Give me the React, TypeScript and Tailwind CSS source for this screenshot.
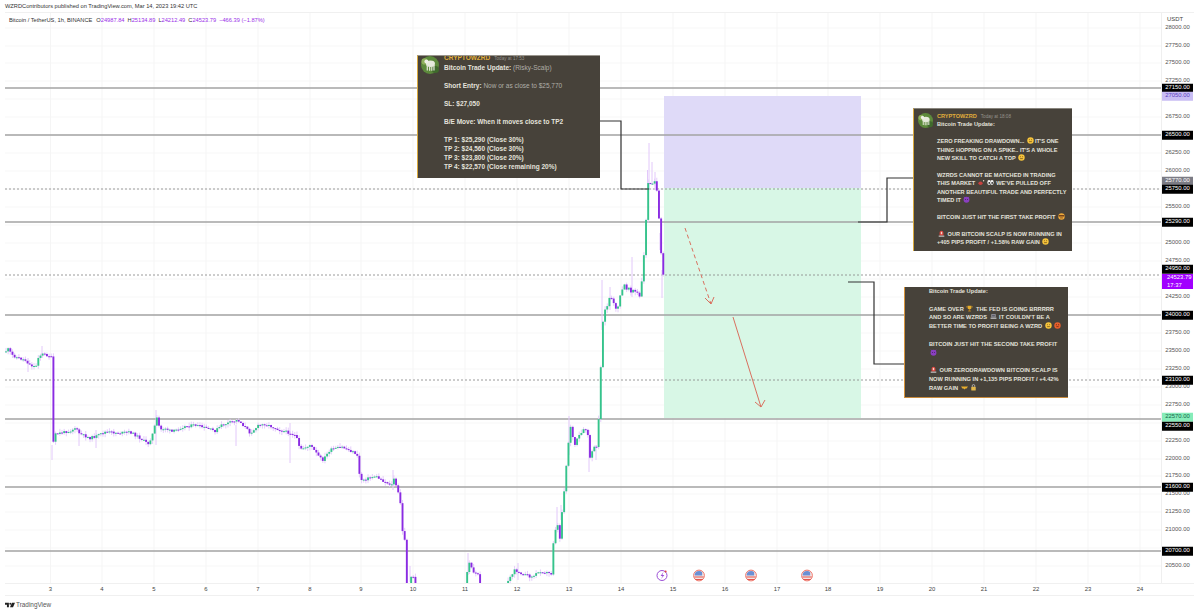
import type { ReactNode } from "react";

// keypoints of the close line, in page pixels
const path: [number, number][] = [
  [5, 352], [8, 349], [12, 355], [18, 358], [25, 360], [30, 365], [36, 367], [37, 358], [42, 354], [50, 356], [51.5, 358],
  [53, 447], [54, 435], [60, 433], [70, 431], [75, 428], [80, 434], [90, 438], [97, 436], [105, 432], [120, 433], [130, 432],
  [140, 438], [148, 444], [152, 436], [157, 418], [160, 430], [165, 428], [172, 432], [182, 427], [195, 425], [205, 428],
  [215, 431], [222, 425], [238, 420], [245, 427], [250, 433], [258, 426], [265, 424], [280, 430], [290, 433], [296, 436],
  [300, 450], [310, 445], [320, 458], [323, 460], [330, 450], [342, 447], [355, 453], [358, 458], [360, 480], [366, 479],
  [375, 476], [385, 482], [392, 485], [394, 478], [397, 490], [400, 497], [402, 530], [405, 540], [407, 590], [409, 590],
  [411, 578], [414, 577], [416, 590], [463, 595], [466, 590], [468, 560], [472, 570], [478, 575], [481, 590], [505, 590],
  [510, 577], [515, 570], [525, 575], [532, 577], [540, 571], [548, 573], [552, 574], [553, 545], [556, 525], [558, 526],
  [559, 547], [562, 512], [565, 480], [567, 458], [570, 425], [571, 426], [573, 440], [575, 445], [580, 435], [585, 430],
  [587, 428], [589, 445], [590, 460], [592, 450], [597, 448], [598, 425], [600, 400], [602, 320], [605, 312], [610, 297],
  [613, 307], [618, 305], [620, 300], [623, 287], [630, 287], [635, 292], [640, 298], [643, 273], [646, 220], [647.5, 183],
  [650, 185], [655, 180], [658, 198], [660, 243], [663.4, 277],
];

const extraWicks: [number, number, number][] = [
  [649, 143, 190], [652, 162, 185], [647.5, 170, 190], [655, 172, 190], [632, 257, 297], [602, 280, 330], [610, 287, 310],
  [662, 270, 298], [660, 233, 250], [52, 445, 460], [79, 428, 446], [96, 430, 448], [156, 410, 445], [290, 423, 463],
  [557, 507, 530], [561, 505, 520], [569, 416, 455], [589, 430, 472], [596, 445, 460], [468, 553, 575], [410, 566, 582],
  [393, 470, 490], [42, 346, 358], [28, 358, 372], [236, 425, 446], [518, 563, 580],
];

function lineAt(x: number) {
  for (let i = 1; i < path.length; i++) {
    if (x <= path[i][0]) {
      const [x0, y0] = path[i - 1];
      const [x1, y1] = path[i];
      return y0 + ((y1 - y0) * (x - x0)) / (x1 - x0);
    }
  }
  return path[path.length - 1][1];
}

function makeCandles() {
  const out: { x: number; o: number; c: number; hi: number; lo: number }[] = [];
  let seed = 11;
  const rnd = () => {
    seed = (seed * 9301 + 49297) % 233280;
    return seed / 233280;
  };
  let prev = lineAt(5);
  for (let x = 6; x < 664; x += 2.155) {
    // the last two days swing harder than the flat stretch before them
    const noise = x > 600 && x < 645 ? 9 : x > 555 && x < 600 ? 5 : 2.6;
    const c = lineAt(x) + (rnd() - 0.5) * noise;
    const top = Math.min(prev, c);
    const bottom = Math.max(prev, c);
    out.push({ x, o: prev, c, hi: top - rnd() * 3.8, lo: bottom + rnd() * 3.8 });
    prev = c;
  }
  return out;
}

const candles = makeCandles();

const solidLevels = [88, 135, 222, 315, 419, 487, 551];
const dashedLevels = [189, 275, 380];
const gridY = [28, 46, 63, 81, 99, 117, 135, 153, 171, 189, 207, 225, 243, 261, 279, 297, 315, 333, 351, 369, 387, 405, 423, 441, 459, 476, 494, 512, 530, 548, 566];
const days = [
  [50.5, "3"], [102, "4"], [154, "5"], [206, "6"], [258, "7"], [310, "8"], [361, "9"], [413, "10"], [465, "11"], [517, "12"], [569, "13"], [621, "14"],
  [673, "15"], [725, "16"], [777, "17"], [828, "18"], [880, "19"], [932, "20"], [984, "21"], [1036, "22"], [1088, "23"], [1140, "24"],
] as const;

const axisLabels: [number, string][] = [
  [28, "28000.00"], [46, "27750.00"], [63, "27500.00"], [81, "27250.00"], [117, "26750.00"], [153, "26250.00"], [171, "26000.00"],
  [207, "25500.00"], [243, "25000.00"], [261, "24750.00"], [297, "24250.00"], [333, "23750.00"], [351, "23500.00"], [369, "23250.00"],
  [387, "23000.00"], [405, "22750.00"], [441, "22250.00"], [459, "22000.00"], [476, "21750.00"], [494, "21500.00"], [512, "21250.00"],
  [530, "21000.00"], [566, "20500.00"],
];

const tags: { y: number; text: string; cls: string }[] = [
  { y: 88, text: "27150.00", cls: "bg-black text-white" },
  { y: 96, text: "27050.00", cls: "bg-[#c9bdf4] text-[#5b3fc0]" },
  { y: 135, text: "26500.00", cls: "bg-black text-white" },
  { y: 181, text: "25770.00", cls: "bg-[#7b7b84] text-white" },
  { y: 189, text: "25750.00", cls: "bg-black text-white" },
  { y: 222, text: "25290.00", cls: "bg-black text-white" },
  { y: 269, text: "24950.00", cls: "bg-black text-white" },
  { y: 315, text: "24000.00", cls: "bg-black text-white" },
  { y: 380, text: "23100.00", cls: "bg-black text-white" },
  { y: 417, text: "22570.00", cls: "bg-[#86ecb9] text-[#14694a]" },
  { y: 426, text: "22550.00", cls: "bg-black text-white" },
  { y: 487, text: "21600.00", cls: "bg-black text-white" },
  { y: 551, text: "20700.00", cls: "bg-black text-white" },
];

function Emoji({ kind }: { kind: string }) {
  const face = "#f5c33b";
  return (
    <svg viewBox="0 0 10 10" className="mx-[1px] inline-block h-[7px] w-[7px] align-[-1px]">
      {kind === "face" && (
        <>
          <circle cx="5" cy="5" r="4.6" fill={face} />
          <circle cx="3.4" cy="4" r=".7" fill="#5a3a10" />
          <circle cx="6.6" cy="4" r=".7" fill="#5a3a10" />
          <path d="M3 6.6h4" stroke="#5a3a10" strokeWidth=".9" />
        </>
      )}
      {kind === "hot" && (
        <>
          <circle cx="5" cy="5" r="4.6" fill="#e8602c" />
          <circle cx="3.4" cy="4" r=".8" fill="#5a2010" />
          <circle cx="6.6" cy="4" r=".8" fill="#5a2010" />
          <path d="M3.4 6.6h3.2" stroke="#5a2010" />
        </>
      )}
      {kind === "star" && (
        <>
          <circle cx="5" cy="5" r="4.6" fill="#eda83a" />
          <rect x="1" y="3" width="8" height="2" fill="#6a3a18" />
          <path d="M3 7h4" stroke="#6a3a18" />
        </>
      )}
      {kind === "devil" && (
        <>
          <circle cx="5" cy="5.4" r="4.2" fill="#8a3fc0" />
          <path d="M1.4 1l1.6 2M8.6 1L7 3" stroke="#8a3fc0" strokeWidth="1.2" />
          <circle cx="3.6" cy="5" r=".7" fill="#2e1045" />
          <circle cx="6.4" cy="5" r=".7" fill="#2e1045" />
        </>
      )}
      {kind === "lips" && (
        <>
          <ellipse cx="3.6" cy="6" rx="3" ry="2.6" fill="#c9413f" />
          <circle cx="8" cy="2.4" r="1" fill="#e8d4c8" />
        </>
      )}
      {kind === "eyes" && (
        <>
          <ellipse cx="2.9" cy="5" rx="2.4" ry="3.4" fill="#f4f4f4" />
          <ellipse cx="7.1" cy="5" rx="2.4" ry="3.4" fill="#f4f4f4" />
          <circle cx="3.2" cy="5.6" r="1.2" fill="#222" />
          <circle cx="7.4" cy="5.6" r="1.2" fill="#222" />
        </>
      )}
      {kind === "siren" && (
        <>
          <path d="M2.2 8V4a2.8 2.8 0 0 1 5.6 0v4z" fill="#d8403a" />
          <rect x="1" y="8" width="8" height="1.6" fill="#c8c8c8" />
          <rect x="4" y="2.6" width="2" height="3.4" fill="#f6d6cc" />
        </>
      )}
      {kind === "trophy" && (
        <>
          <path d="M2.4 1h5.2v3a2.6 2.6 0 0 1-5.2 0z" fill="#e6ac2c" />
          <path d="M4.4 6h1.2v2H4.4zM3 8h4v1.4H3z" fill="#b57f1e" />
          <path d="M2.4 2H1v1.4l1.4 1M7.6 2H9v1.4l-1.4 1" stroke="#e6ac2c" fill="none" strokeWidth=".7" />
        </>
      )}
      {kind === "laptop" && (
        <>
          <rect x="2" y="1.6" width="6" height="4.4" fill="#a9a9b2" />
          <rect x="3" y="2.4" width="4" height="2.8" fill="#5d5d68" />
          <rect x=".8" y="6.6" width="8.4" height="1.6" fill="#d0d0d6" />
        </>
      )}
      {kind === "hands" && <path d="M0 3.4h10L8 6.6H6.4L5 8 3.6 6.6H2z" fill="#e6ac2c" />}
      {kind === "bag" && (
        <>
          <rect x="1.8" y="4" width="6.4" height="5.4" rx="1" fill="#e2b64a" />
          <path d="M3.2 4V2.6a1.8 1.8 0 0 1 3.6 0V4" stroke="#d8d8d8" fill="none" />
        </>
      )}
    </svg>
  );
}

// green disc with a pale four-legged figure
function Avatar({ className }: { className: string }) {
  return (
    <svg viewBox="0 0 20 20" className={className}>
      <circle cx="10" cy="10" r="10" fill="#5d8a3c" />
      <circle cx="4" cy="6" r="3.5" fill="#8fb05c" />
      <circle cx="16" cy="15" r="4" fill="#3f6a2c" />
      <ellipse cx="10.5" cy="8.5" rx="5" ry="3.6" fill="#e6eadc" />
      <circle cx="6" cy="6" r="2.2" fill="#eef0e6" />
      <path d="M7 10v6M9.6 11v5.4M12 11v5.4M14.4 10v6" stroke="#dfe4d2" strokeWidth="1.4" />
    </svg>
  );
}

function Line({ children, gap }: { children?: ReactNode; gap?: boolean }) {
  return <div className={gap ? "mt-[1lh] whitespace-nowrap" : "whitespace-nowrap"}>{children}</div>;
}

function CardHead({ time, className }: { time: string; className: string }) {
  return (
    <div className={`flex items-baseline gap-[4px] overflow-visible whitespace-nowrap ${className}`}>
      <span className="font-semibold text-[#e0ae3a]">CRYPTOWZRD</span>
      <span className="text-[4.6px] text-[#96938c]">Today at {time}</span>
    </div>
  );
}

const B = ({ children }: { children: ReactNode }) => <span className="font-semibold text-[#e4e2dc]">{children}</span>;
const R = ({ children }: { children: ReactNode }) => <span className="text-[#b0aea8]">{children}</span>;

export default function App() {
  return (
    <div className="flex h-[613px] w-[1200px] flex-col overflow-hidden bg-white font-['Liberation_Sans',sans-serif] text-[#3a3a3a]">
      <div className="flex h-[12px] items-center pl-[5px] pt-[2px] text-[5.7px] leading-none text-[#333]">
        WZRDContributors published on TradingView.com, Mar 14, 2023 19:42 UTC
      </div>

      <div className="ml-[5px] mr-[6px] flex h-[571px] border-t border-[#f0f0f0]">
        <div className="relative h-full w-[1156px]">
          <svg viewBox="5 13 1156 570" className="absolute inset-0 h-full w-full">
            {gridY.map((y) => (
              <line key={y} x1="5" x2="1161" y1={y} y2={y} stroke="#f7f7f7" />
            ))}
            {days.map(([x]) => (
              <line key={x} x1={x} x2={x} y1="13" y2="583" stroke="#f5f5f5" />
            ))}
            <rect x="664" y="96" width="197" height="92" fill="#dfdaf8" />
            <rect x="664" y="188" width="197" height="230" fill="#d8f7e6" />
            {solidLevels.map((y) => (
              <line key={y} x1="5" x2="1161" y1={y} y2={y} stroke="#a3a3a3" strokeWidth="1.4" />
            ))}
            {dashedLevels.map((y) => (
              <line key={y} x1="5" x2="1161" y1={y} y2={y} stroke="#8f8f8f" strokeWidth="0.9" strokeDasharray="2 2" />
            ))}
            {candles.map((k) => (
              <line key={k.x} x1={k.x} x2={k.x} y1={k.hi} y2={k.lo} stroke="#e2c8fa" strokeWidth="0.9" />
            ))}
            {extraWicks.map(([x, a, b]) => (
              <line key={`${x}-${a}`} x1={x} x2={x} y1={a} y2={b} stroke="#e2c8fa" strokeWidth="1" />
            ))}
            {candles.map((k) => {
              const up = k.c < k.o;
              const top = Math.min(k.o, k.c);
              return (
                <rect
                  key={k.x}
                  x={k.x - 0.95}
                  y={top}
                  width="1.9"
                  height={Math.max(Math.abs(k.c - k.o), 1)}
                  fill={up ? "#35c48b" : "#8a2be2"}
                />
              );
            })}
            <path d="M600 121H621V189H649" fill="none" stroke="#333" strokeWidth="1.2" />
            <path d="M858 222H887V178H913" fill="none" stroke="#333" strokeWidth="1.2" />
            <path d="M848 282H874V364H905" fill="none" stroke="#333" strokeWidth="1.2" />
            <path d="M685 228L711 304" stroke="#d9705f" strokeWidth="1" strokeDasharray="4 3" />
            <path d="M705 298L711 304L714 297" fill="none" stroke="#d9705f" strokeWidth="1" />
            <path d="M733 317L761 407" stroke="#d9705f" strokeWidth="1" />
            <path d="M755 402L761 407L765 400" fill="none" stroke="#d9705f" strokeWidth="1" />
            <circle cx="662" cy="575.5" r="5" fill="#fff" stroke="#9c4fd6" strokeWidth="1" />
            <path d="M663.4 572L660.6 576H662.6L661 579L664.4 575H662.4Z" fill="#9c4fd6" />
            <circle cx="665.6" cy="571.6" r="1" fill="#e2433f" />
            {[699, 751, 807].map((x) => (
              <g key={x}>
                <circle cx={x} cy="575.5" r="5.4" fill="#f4e6e4" stroke="#f0786c" strokeWidth="1" />
                <path d={`M${x - 4.6} 576.5h9.2v1h-9.2zM${x - 3.8} 579h7.6v1h-7.6z`} fill="#e4554e" />
                <path d={`M${x - 4.4} 575.5a4.6 4.6 0 0 1 4.6-4.4a4.6 4.6 0 0 1 3 1.2v3.2z`} fill="#6b8fd4" />
              </g>
            ))}
          </svg>

          <div className="absolute left-[4px] top-[2px] whitespace-nowrap text-[5.7px] leading-[10px]">
            <span className="text-[#333]">Bitcoin / TetherUS, 1h, BINANCE</span>
            <span className="ml-[4px] text-[#333]">O</span>
            <span className="text-[#9b30e8]">24987.84</span>
            <span className="ml-[3px] text-[#333]">H</span>
            <span className="text-[#9b30e8]">25134.89</span>
            <span className="ml-[3px] text-[#333]">L</span>
            <span className="text-[#9b30e8]">24212.49</span>
            <span className="ml-[3px] text-[#333]">C</span>
            <span className="text-[#9b30e8]">24523.79</span>
            <span className="ml-[3px] text-[#9b30e8]">−466.39 (−1.87%)</span>
          </div>

          <div className="absolute left-[412px] top-[42px] flex h-[123px] w-[183px] gap-[5px] overflow-hidden border-l border-t border-l-[#d9a93c] border-t-[#9a968e] bg-[#47423a] pl-[3px] text-[6.5px] leading-[9px]">
            <Avatar className="h-[18px] w-[18px] shrink-0" />
            <div>
              <CardHead time="17:53" className="-mt-[3.5px] h-[10px]" />
              <Line><B>Bitcoin Trade Update:</B> <R>(Risky-Scalp)</R></Line>
              <Line gap><B>Short Entry:</B> <R>Now or as close to $25,770</R></Line>
              <Line gap><B>SL: $27,050</B></Line>
              <Line gap><B>B/E Move: When it moves close to TP2</B></Line>
              <Line gap><B>TP 1: $25,290 (Close 30%)</B></Line>
              <Line><B>TP 2: $24,560 (Close 30%)</B></Line>
              <Line><B>TP 3: $23,800 (Close 20%)</B></Line>
              <Line><B>TP 4: $22,570 (Close remaining 20%)</B></Line>
            </div>
          </div>

          <div className="absolute left-[908px] top-[95px] flex h-[143px] w-[159px] gap-[4px] overflow-hidden border-l border-t border-l-[#d9a93c] border-t-[#8a867e] bg-[#47423a] pl-[4px] pt-[3px] text-[5.6px] leading-[8.4px]">
            <Avatar className="mt-[1px] h-[15px] w-[15px] shrink-0" />
            <div>
              <CardHead time="18:08" className="h-[8.4px]" />
              <Line><B>Bitcoin Trade Update:</B></Line>
              <Line gap><B>ZERO FREAKING DRAWDOWN... <Emoji kind="face" />IT'S ONE</B></Line>
              <Line><B>THING HOPPING ON A SPIKE.. IT'S A WHOLE</B></Line>
              <Line><B>NEW SKILL TO CATCH A TOP <Emoji kind="face" /></B></Line>
              <Line gap><B>WZRDS CANNOT BE MATCHED IN TRADING</B></Line>
              <Line><B>THIS MARKET <Emoji kind="lips" /><Emoji kind="eyes" /> WE'VE PULLED OFF</B></Line>
              <Line><B>ANOTHER BEAUTIFUL TRADE AND PERFECTLY</B></Line>
              <Line><B>TIMED IT <Emoji kind="devil" /></B></Line>
              <Line gap><B>BITCOIN JUST HIT THE FIRST TAKE PROFIT <Emoji kind="star" /></B></Line>
              <Line gap><B><Emoji kind="siren" /> OUR BITCOIN SCALP IS NOW RUNNING IN</B></Line>
              <Line><B>+405 PIPS PROFIT / +1.58% RAW GAIN <Emoji kind="face" /></B></Line>
            </div>
          </div>

          <div className="absolute left-[899px] top-[274px] h-[111px] w-[164px] overflow-hidden border-b border-l border-b-[#c98a3a] border-l-[#d9953c] bg-[#47423a] pl-[24px] text-[5.7px] leading-[8.8px]">
            <Line><B>Bitcoin Trade Update:</B></Line>
            <Line gap><B>GAME OVER <Emoji kind="trophy" /> THE FED IS GOING BRRRRR</B></Line>
            <Line><B>AND SO ARE WZRDS <Emoji kind="laptop" /> IT COULDN'T BE A</B></Line>
            <Line><B>BETTER TIME TO PROFIT BEING A WZRD <Emoji kind="face" /><Emoji kind="hot" /></B></Line>
            <Line gap><B>BITCOIN JUST HIT THE SECOND TAKE PROFIT</B></Line>
            <Line><Emoji kind="devil" /></Line>
            <Line gap><B><Emoji kind="siren" /> OUR ZERODRAWDOWN BITCOIN SCALP IS</B></Line>
            <Line><B>NOW RUNNING IN +1,135 PIPS PROFIT / +4.42%</B></Line>
            <Line><B>RAW GAIN <Emoji kind="hands" /><Emoji kind="bag" /></B></Line>
          </div>
        </div>

        <div className="relative h-full w-[33px] border-l border-[#efefef] text-[5.9px] leading-none text-[#555]">
          <div className="absolute left-[5px] top-[1px] leading-[10px] text-[#444]">USDT</div>
          {axisLabels.map(([y, text]) => (
            <div key={text} className="absolute left-0 w-[31px] -translate-y-1/2 text-center" style={{ top: y - 13 }}>
              {text}
            </div>
          ))}
          {tags.map((t) => (
            <div
              key={t.text}
              className={`absolute left-0 flex h-[8.5px] w-[31px] -translate-y-1/2 items-center justify-center ${t.cls}`}
              style={{ top: t.y - 13 }}
            >
              {t.text}
            </div>
          ))}
          <div className="absolute left-0 top-[261px] flex h-[15px] w-[31px] flex-col justify-center bg-[#a100ff] pl-[5px] leading-[7.5px] text-white">
            <span>24523.79</span>
            <span>17:37</span>
          </div>
        </div>
      </div>

      <div className="relative ml-[5px] mr-[6px] h-[13px] border-y border-[#f0f0f0] text-[5.9px] text-[#444]">
        {days.map(([x, label]) => (
          <span key={label} className="absolute top-[1px] -translate-x-1/2 leading-[9px]" style={{ left: x - 5 }}>
            {label}
          </span>
        ))}
      </div>

      <div className="flex items-center gap-[1px] pl-[5px] pt-[4px] text-[6.4px] leading-[9px] text-[#555]">
        <svg viewBox="0 0 36 20" className="h-[6px] w-[10px]">
          <path d="M0 2h14v16H7V9H0z" fill="#222" />
          <circle cx="19" cy="5.5" r="3.5" fill="#222" />
          <path d="M25 2h11l-7 16H18z" fill="#222" />
        </svg>
        <span>TradingView</span>
      </div>
    </div>
  );
}
